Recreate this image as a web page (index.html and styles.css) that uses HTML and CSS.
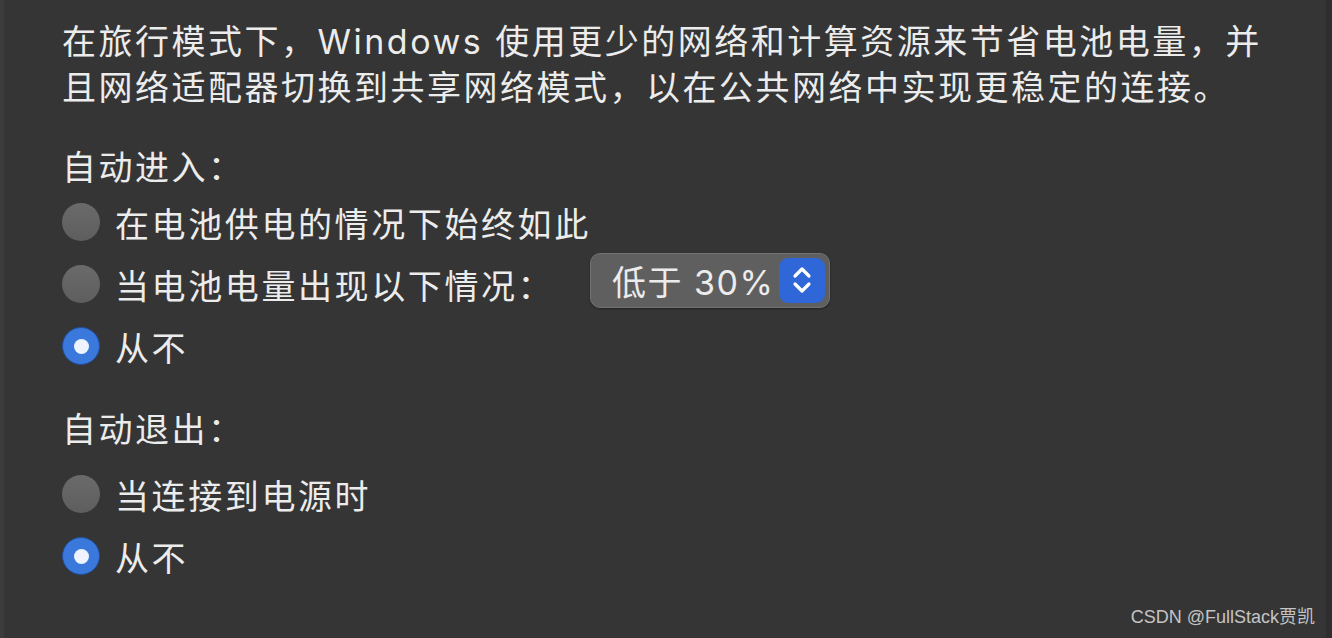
FILE: index.html
```html
<!DOCTYPE html>
<html lang="zh-CN">
<head>
    <meta charset="UTF-8">
    <meta name="viewport" content="width=device-width, initial-scale=1.0">
    <title>旅行模式</title>
    <link rel="stylesheet" href="styles.css">
</head>
<body>
    <div class="panel">
        <p class="intro">在旅行模式下，Windows 使用更少的网络和计算资源来节省电池电量，并<br>且网络适配器切换到共享网络模式，以在公共网络中实现更稳定的连接。</p>

        <div class="group group-enter">
            <div class="group-title">自动进入：</div>
            <label class="option">
                <span class="radio"></span>
                <span>在电池供电的情况下始终如此</span>
            </label>
            <label class="option">
                <span class="radio"></span>
                <span class="option-text">当电池电量出现以下情况：</span>
                <span class="popup">
                    <span class="popup-value">低于 30%</span>
                    <span class="stepper">
                        <svg width="26" height="34" viewBox="0 0 26 34">
                            <path d="M6 13 L13 6 L20 13" fill="none" stroke="#fff" stroke-width="3.2" stroke-linecap="round" stroke-linejoin="round"/>
                            <path d="M6 21 L13 28 L20 21" fill="none" stroke="#fff" stroke-width="3.2" stroke-linecap="round" stroke-linejoin="round"/>
                        </svg>
                    </span>
                </span>
            </label>
            <label class="option">
                <span class="radio checked"></span>
                <span>从不</span>
            </label>
        </div>

        <div class="group group-exit">
            <div class="group-title">自动退出：</div>
            <label class="option">
                <span class="radio"></span>
                <span>当连接到电源时</span>
            </label>
            <label class="option">
                <span class="radio checked"></span>
                <span>从不</span>
            </label>
        </div>
    </div>

    <div class="watermark">CSDN @FullStack贾凯</div>
</body>
</html>
```

FILE: styles.css
```css
html, body {
    height: 100%;
}
body {
    margin: 0;
    background-color: #353535;
    color: #ececec;
    font-family: Inter, "Noto Sans CJK SC", sans-serif;
    overflow: hidden;
    border-left: 4px solid #3c3c3c;
    border-right: 6px solid #2e2e2e;
    box-sizing: border-box;
}
.panel {
    padding: 19px 0 0 58px;
}
.intro {
    margin: 0;
    font-size: 34px;
    line-height: 46px;
    letter-spacing: 2.5px;
    white-space: nowrap;
}
.group-enter {
    margin-top: 34px;
}
.group-exit {
    margin-top: 30px;
}
.group-title {
    font-size: 34px;
    line-height: 46px;
    letter-spacing: 2.5px;
}
.option {
    display: flex;
    align-items: center;
    height: 62px;
    font-size: 34px;
    letter-spacing: 2.6px;
}
.group-exit .group-title {
    margin-bottom: 10px;
}
.radio {
    width: 38px;
    height: 38px;
    border-radius: 50%;
    background: linear-gradient(#6a6a6a, #5e5e5e);
    margin-right: 15px;
    box-sizing: border-box;
    display: flex;
    align-items: center;
    justify-content: center;
    flex-shrink: 0;
}
.radio.checked {
    background: #3a78dc;
    border: 1px solid #1f4f9e;
}
.radio.checked::after {
    content: "";
    width: 15px;
    height: 15px;
    border-radius: 50%;
    background: #eef3ff;
}
.option-text {
    width: 475px;
}
.popup {
    display: flex;
    align-items: center;
    height: 55px;
    width: 240px;
    margin-bottom: 8px;
    box-sizing: border-box;
    background: #5f5f5f;
    border: 1px solid #727272;
    border-radius: 10px;
    padding: 0 4px 0 21px;
    justify-content: space-between;
    box-shadow: 0 1px 2px rgba(0, 0, 0, 0.4);
}
.popup-value {
    font-size: 34px;
    letter-spacing: 1.5px;
}
.stepper {
    width: 46px;
    height: 45px;
    border-radius: 9px;
    background: #2f66d8;
    display: flex;
    align-items: center;
    justify-content: center;
}
.watermark {
    position: absolute;
    right: 17px;
    bottom: 10px;
    font-family: "Liberation Sans", "Noto Sans CJK SC", sans-serif;
    font-size: 18px;
    color: #c4c4c4;
}
```
